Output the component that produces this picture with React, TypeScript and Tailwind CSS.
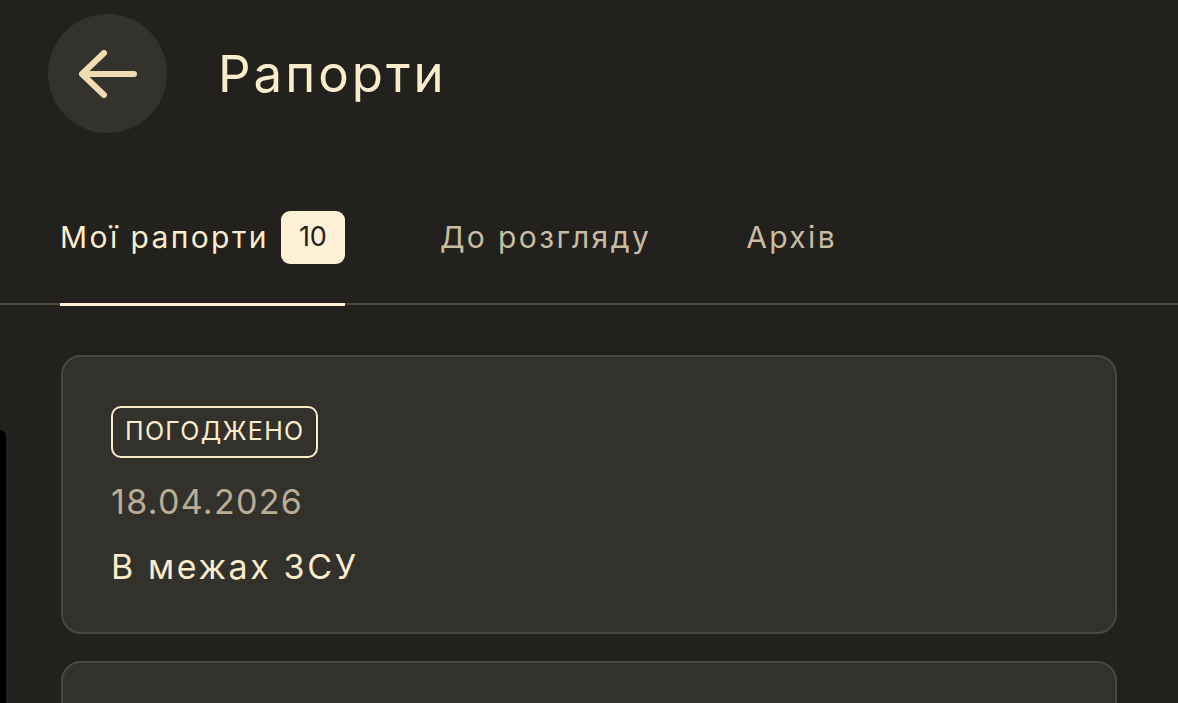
const tabs = [
  { label: "Мої рапорти", count: 10, active: true },
  { label: "До розгляду", active: false },
  { label: "Архів", active: false },
]

const reports = [
  { status: "ПОГОДЖЕНО", date: "18.04.2026", title: "В межах ЗСУ" },
  { status: "НА РОЗГЛЯДІ", date: "12.04.2026", title: "Відпустка" },
]

export default function App() {
  return (
    <div className="relative h-[703px] overflow-hidden bg-[#22211e] font-['Inter',sans-serif] text-[#fbeccb]">
      {/* header */}
      <div className="flex items-center gap-[51px] pl-[48px] pt-[14px]">
        <button className="flex h-[119px] w-[119px] items-center justify-center rounded-full bg-[#34322d]">
          <svg width="58" height="48" viewBox="0 0 58 48" fill="none" stroke="#f1dcb2" strokeWidth="6" strokeLinecap="round" strokeLinejoin="round">
            <path d="M55 24H3M25 3L3 24L25 45" />
          </svg>
        </button>
        <h1 className="text-[51px] font-normal leading-none tracking-[3px]">Рапорти</h1>
      </div>

      {/* tabs */}
      <div className="mt-[57px] flex gap-[95px] border-b-2 border-[#4a4740] pl-[60px]">
        {tabs.map((tab) => (
          <div
            key={tab.label}
            className={`relative flex h-[113px] items-center pb-[18px] text-[30px] tracking-[2.4px] ${
              tab.active ? "text-[#fbeccb]" : "text-[#c8bca3]"
            }`}
          >
            <span>{tab.label}</span>
            {tab.count && (
              <span className="ml-[12px] flex h-[53px] w-[64px] items-center justify-center rounded-[9px] bg-[#fdf0d4] text-[27px] tracking-[0px] text-[#22211e]">
                {tab.count}
              </span>
            )}
            {tab.active && <span className="absolute bottom-[-3px] left-0 right-0 h-[3px] bg-[#fdf0d4]" />}
          </div>
        ))}
      </div>

      {/* cards */}
      <div className="mt-[50px] flex flex-col gap-[27px] px-[61px]">
        {reports.map((r) => (
          <div
            key={r.date}
            className="flex h-[279px] shrink-0 flex-col items-start rounded-[20px] border-2 border-[#4a4740] bg-[#33312c] pl-[48px] pt-[49px]"
          >
            <span className="flex h-[52px] items-center rounded-[10px] border-2 border-[#fbeccb] px-[12px] text-[25px] tracking-[1.3px]">
              {r.status}
            </span>
            <p className="mt-[27px] text-[34px] leading-none tracking-[1.3px] text-[#b9ad96]">{r.date}</p>
            <p className="mt-[31px] text-[34px] leading-none tracking-[2.6px]">{r.title}</p>
          </div>
        ))}
      </div>

      {/* screen edge shadow */}
      <div className="absolute bottom-0 left-0 top-[430px] w-[6px] rounded-tr-[40px] bg-black" />
    </div>
  )
}
